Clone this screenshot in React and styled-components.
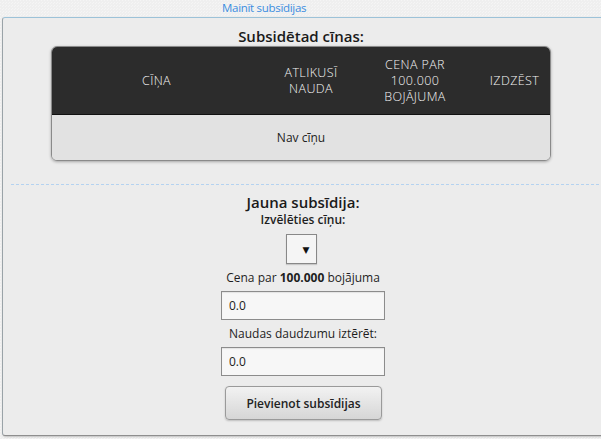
import styled, { createGlobalStyle } from 'styled-components';

const GlobalStyle = createGlobalStyle`
    html, body {
        margin: 0;
        padding: 0;
        background-color: #efefef;
        background-image: linear-gradient(45deg, rgba(255,255,255,0.35) 25%, transparent 25%, transparent 75%, rgba(255,255,255,0.35) 75%);
        background-size: 3px 3px;
        font-family: "Open Sans", "DejaVu Sans", sans-serif;
        color: #222;
    }
`;

const Page = styled.div`
    width: 601px;
    height: 439px;
    overflow: hidden;
    display: flex;
    flex-direction: column;
`;

const TopLink = styled.a`
    display: block;
    font-size: 11.5px;
    line-height: 16px;
    height: 17px;
    letter-spacing: -0.3px;
    color: #3b8de0;
    text-decoration: none;
    padding-left: 222px;
`;

const Panel = styled.section`
    margin-left: 2px;
    width: 620px;
    height: 419px;
    box-sizing: border-box;
    border-top: 1px solid #9cc2d8;
    border-left: 1px solid #9aa3a8;
    border-bottom: 1px solid #8e8e8e;
    border-radius: 3px 0 0 3px;
    background-color: #e6e6e6;
    background-image: radial-gradient(rgba(255,255,255,0.55) 0.6px, transparent 0.8px);
    background-size: 2px 2px;
    box-shadow: 1px 1px 2px rgba(0,0,0,0.2);
`;

const Inner = styled.div`
    width: 596px;
    display: flex;
    flex-direction: column;
    align-items: center;
`;

const Heading = styled.h2`
    margin: 9px 0 0;
    font-size: 15px;
    line-height: 19px;
    font-weight: 600;
    color: #1a1a1a;
    padding-left: ${p => p.$shift || 0}px;
`;

const Table = styled.div`
    width: 500px;
    border-radius: 6px;
    overflow: hidden;
    border: 1px solid #8a8a8a;
    box-shadow: 0 1px 3px rgba(0,0,0,0.3);
    box-sizing: border-box;
`;

const HeadRow = styled.div`
    display: grid;
    grid-template-columns: 209px 100px 108px 1fr;
    height: 67px;
    background: #2c2c2c;
    border-bottom: 1px solid #111;
    align-items: center;
`;

const HeadCell = styled.div`
    color: #f4f4f4;
    font-size: 12.5px;
    line-height: 16px;
    font-weight: 300;
    text-transform: uppercase;
    text-align: center;
    letter-spacing: 0.4px;
    padding-left: ${p => p.$pad || 0}px;
`;

const EmptyRow = styled.div`
    height: 45px;
    background: #e2e2e2;
    display: flex;
    align-items: center;
    justify-content: center;
    font-size: 12px;
    color: #222;
`;

const Divider = styled.hr`
    align-self: stretch;
    margin: 23px 0 0 8px;
    border: 0;
    border-top: 1px dashed #b4d2f0;
`;

const SubHeading = styled(Heading)`
    margin-top: 8px;
`;

const Label = styled.label`
    display: block;
    font-size: 12px;
    line-height: 16px;
    margin-top: ${p => p.$top || 0}px;
    font-weight: ${p => (p.$strong ? 600 : 400)};
    color: #1e1e1e;
    padding-left: ${p => p.$shift || 0}px;
`;

const SelectBox = styled.div`
    margin-top: 6px;
    width: 31px;
    height: 30px;
    box-sizing: border-box;
    border: 1px solid #888;
    background: #f5f5f5;
    box-shadow: 0 1px 1px rgba(0,0,0,0.15);
    display: flex;
    align-items: center;
    justify-content: flex-end;
    padding-right: 6px;
    font-size: 9px;
    color: #111;
`;

const Input = styled.input`
    margin-top: 5px;
    margin-left: 4px;
    width: 164px;
    height: 29px;
    box-sizing: border-box;
    border: 1px solid #8c8c8c;
    background: #f7f7f7;
    padding: 0 7px;
    font-family: inherit;
    font-size: 12px;
    color: #222;
    box-shadow: inset 0 1px 1px rgba(0,0,0,0.08);
    outline: none;
`;

const Button = styled.button`
    margin-top: 10px;
    margin-left: 5px;
    width: 157px;
    height: 34px;
    border: 1px solid #9a9a9a;
    border-radius: 4px;
    background: linear-gradient(#f2f2f2, #d6d6d6);
    font-family: inherit;
    font-size: 12px;
    font-weight: 600;
    color: #222;
    box-shadow: 0 1px 2px rgba(0,0,0,0.2);
`;

export default function App() {
    return (
        <Page>
            <GlobalStyle />
            <TopLink href="#">Mainīt subsīdijas</TopLink>
            <Panel>
                <Inner>
                    <Heading>Subsidētad cīnas:</Heading>
                    <Table>
                        <HeadRow>
                            <HeadCell>Cīņa</HeadCell>
                            <HeadCell>Atlikusī<br />nauda</HeadCell>
                            <HeadCell>Cena par<br />100.000<br />bojājuma</HeadCell>
                            <HeadCell $pad={10}>Izdzēst</HeadCell>
                        </HeadRow>
                        <EmptyRow>Nav cīņu</EmptyRow>
                    </Table>
                    <Divider />
                    <SubHeading $shift={4}>Jauna subsīdija:</SubHeading>
                    <Label $strong $shift={4}>Izvēlēties cīņu:</Label>
                    <SelectBox>▼</SelectBox>
                    <Label $top={6} $shift={4}>Cena par <b>100.000</b> bojājuma</Label>
                    <Input defaultValue="0.0" />
                    <Label $top={6} $shift={4}>Naudas daudzumu iztērēt:</Label>
                    <Input defaultValue="0.0" />
                    <Button>Pievienot subsīdijas</Button>
                </Inner>
            </Panel>
        </Page>
    );
}
